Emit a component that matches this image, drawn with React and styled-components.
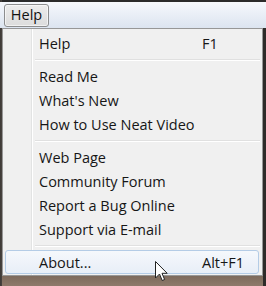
import styled, { createGlobalStyle } from 'styled-components';

const Global = createGlobalStyle`
  html, body { margin: 0; padding: 0; }
  body { background: #2a2624; }
`;

const groups = [
    [{ label: 'Help', key: 'F1' }],
    [{ label: 'Read Me' }, { label: "What's New" }, { label: 'How to Use Neat Video' }],
    [{ label: 'Web Page' }, { label: 'Community Forum' }, { label: 'Report a Bug Online' }, { label: 'Support via E-mail' }],
    [{ label: 'About...', key: 'Alt+F1', hot: true }],
];

export default function App() {
    return (
        <Screen>
            <Global />
            <MenuBar>
                <BarButton>Help</BarButton>
            </MenuBar>
            <Dropdown>
                {groups.map((items, g) => (
                    <Group key={g}>
                        {g > 0 && <Separator />}
                        {items.map((it) => (
                            <Item key={it.label} $hot={it.hot}>
                                <Label>{it.label}</Label>
                                <Shortcut>{it.key}</Shortcut>
                            </Item>
                        ))}
                    </Group>
                ))}
            </Dropdown>
            <Cursor viewBox="0 0 13 21" width="13" height="21">
                <path d="M0.5 0.5 L0.5 17 L4.5 13 L7.2 19.5 L9.6 18.5 L7 12.3 L12.2 12.3 Z" fill="#fff" stroke="#222" strokeWidth="1" strokeLinejoin="round" />
            </Cursor>
        </Screen>
    )
}

const Screen = styled.div`
position: relative;
width: 266px;
height: 286px;
overflow: hidden;
padding-top: 2px;
box-sizing: border-box;
font-family: "Open Sans", "Noto Sans", sans-serif;
background:
  linear-gradient(to right, #3c3936 0, #4a4440 2px, transparent 2px, transparent 263px, #2e2b29 263px),
  linear-gradient(to bottom, #2b2b2b 0, #2b2b2b 2px, #3b3532 30px, #5a4b42 200px, #7d6a5c 276px, #8e7a6b 286px);
`

const MenuBar = styled.div`
height: 26px;
display: flex;
align-items: center;
padding-left: 4px;
background: linear-gradient(to bottom, #f6f8fc 0%, #eaeff7 45%, #dce4f0 100%);
`

const BarButton = styled.div`
height: 23px;
width: 45px;
box-sizing: border-box;
border: 1px solid #8c8d8e;
border-radius: 3px;
background: linear-gradient(to bottom, #ececec, #dcdcdc);
box-shadow: inset 0 0 0 1px rgba(255,255,255,0.6);
font-size: 14.5px;
color: #111;
display: flex;
align-items: center;
justify-content: center;
line-height: 1;
`

const Dropdown = styled.div`
margin-left: 2px;
width: 261px;
box-sizing: border-box;
border: 1px solid #979797;
padding: 2px 2px 1px 2px;
background:
  linear-gradient(to right, transparent 28px, #e2e3e3 28px, #e2e3e3 29px, #ffffff 29px, #ffffff 30px, transparent 30px),
  #f0f0f0;
background-origin: padding-box;
background-clip: padding-box;
`

const Group = styled.div`
display: flex;
flex-direction: column;
`

const Separator = styled.div`
height: 9px;
margin-left: 30px;
background: linear-gradient(to bottom, transparent 4px, #e0e0e0 4px, #e0e0e0 5px, #ffffff 5px, #ffffff 6px, transparent 6px);
`

const Item = styled.div`
height: 24px;
box-sizing: border-box;
margin-right: 1px;
display: grid;
grid-template-columns: 163px auto;
align-items: center;
padding-left: 34px;
font-size: 14.5px;
color: #161616;
border: 1px solid ${p => p.$hot ? '#b4cce6' : 'transparent'};
border-radius: 3px;
background: ${p => p.$hot ? 'linear-gradient(to bottom, #f5f8fc, #e8eef7)' : 'transparent'};
`

const Label = styled.span`
white-space: nowrap;
margin-left: -1px;
`

const Shortcut = styled.span`
white-space: nowrap;
margin-left: -1px;
`

const Cursor = styled.svg`
position: absolute;
left: 155px;
top: 261px;
`
